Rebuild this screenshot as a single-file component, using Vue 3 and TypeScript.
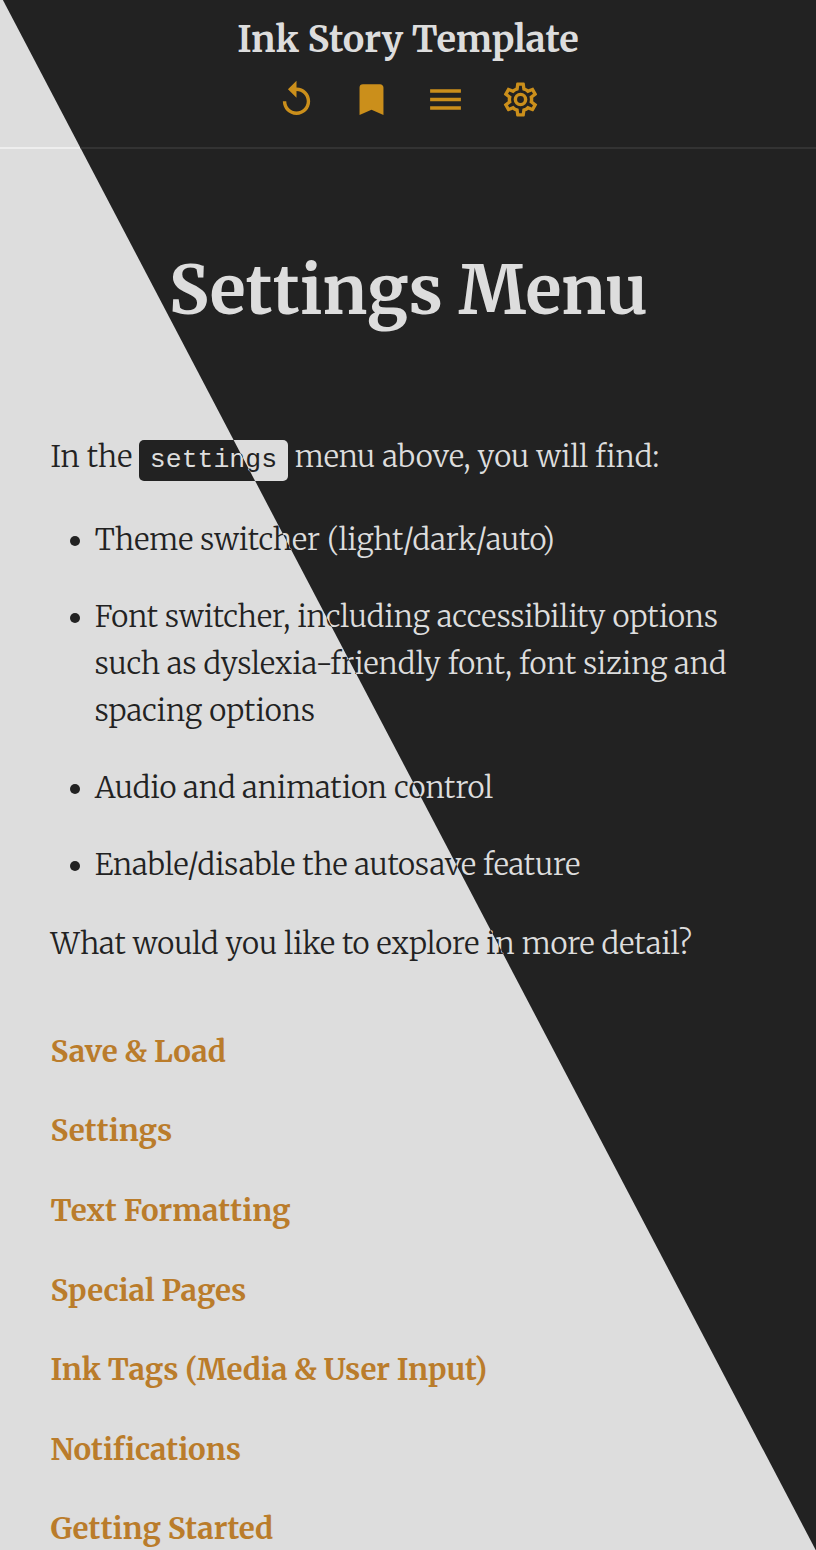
<script setup lang="ts">
interface Icon {
  name: string
  path: string
}

const themes = ['light', 'dark'] as const

const icons: Icon[] = [
  {
    name: 'Restart',
    path: 'M12 5V1L7 6l5 5V7c3.31 0 6 2.69 6 6s-2.69 6-6 6-6-2.69-6-6H4c0 4.42 3.58 8 8 8s8-3.58 8-8-3.58-8-8-8z',
  },
  { name: 'Save', path: 'M17 3H7A2 2 0 0 0 5 5V21L12 18L19 21V5C19 3.89 18.1 3 17 3Z' },
  { name: 'Menu', path: 'M3 6H21V8H3V6M3 11H21V13H3V11M3 16H21V18H3V16Z' },
  {
    name: 'Settings',
    path: 'M12,8A4,4 0 0,1 16,12A4,4 0 0,1 12,16A4,4 0 0,1 8,12A4,4 0 0,1 12,8M12,10A2,2 0 0,0 10,12A2,2 0 0,0 12,14A2,2 0 0,0 14,12A2,2 0 0,0 12,10M10,22C9.75,22 9.54,21.82 9.5,21.58L9.13,18.93C8.5,18.68 7.96,18.34 7.44,17.94L4.95,18.95C4.73,19.03 4.46,18.95 4.34,18.73L2.34,15.27C2.21,15.05 2.27,14.78 2.46,14.63L4.57,12.97L4.5,12L4.57,11L2.46,9.37C2.27,9.22 2.21,8.95 2.34,8.73L4.34,5.27C4.46,5.05 4.73,4.96 4.95,5.05L7.44,6.05C7.96,5.66 8.5,5.32 9.13,5.07L9.5,2.42C9.54,2.18 9.75,2 10,2H14C14.25,2 14.46,2.18 14.5,2.42L14.87,5.07C15.5,5.32 16.04,5.66 16.56,6.05L19.05,5.05C19.27,4.96 19.54,5.05 19.66,5.27L21.66,8.73C21.79,8.95 21.73,9.22 21.54,9.37L19.43,11L19.5,12L19.43,13L21.54,14.63C21.73,14.78 21.79,15.05 21.66,15.27L19.66,18.73C19.54,18.95 19.27,19.04 19.05,18.95L16.56,17.95C16.04,18.34 15.5,18.68 14.87,18.93L14.5,21.58C14.46,21.82 14.25,22 14,22H10M11.25,4L10.88,6.61C9.68,6.86 8.62,7.5 7.85,8.39L5.44,7.35L4.69,8.65L6.8,10.2C6.4,11.37 6.4,12.64 6.8,13.8L4.68,15.36L5.43,16.66L7.86,15.62C8.63,16.5 9.68,17.14 10.87,17.38L11.24,20H12.76L13.13,17.39C14.32,17.14 15.37,16.5 16.14,15.62L18.57,16.66L19.32,15.36L17.2,13.81C17.6,12.64 17.6,11.37 17.2,10.2L19.31,8.65L18.56,7.35L16.15,8.39C15.38,7.5 14.32,6.86 13.12,6.62L12.75,4H11.25Z',
  },
]

const features = [
  'Theme switcher (light/dark/auto)',
  'Font switcher, including accessibility options such as dyslexia-friendly font, font sizing and spacing options',
  'Audio and animation control',
  'Enable/disable the autosave feature',
]

const choices = [
  'Save & Load',
  'Settings',
  'Text Formatting',
  'Special Pages',
  'Ink Tags (Media & User Input)',
  'Notifications',
  'Getting Started',
]
</script>

<template>
  <div class="stage">
    <!-- The same page in both themes; the dark one is cut along the diagonal -->
    <div v-for="theme in themes" :key="theme" class="page" :class="theme" :aria-hidden="theme === 'dark'">
      <header class="topbar">
        <div class="title">Ink Story Template</div>
        <nav class="tools">
          <svg v-for="icon in icons" :key="icon.name" viewBox="0 0 24 24" :aria-label="icon.name">
            <path :d="icon.path" />
          </svg>
        </nav>
      </header>
      <main class="story">
        <h1>Settings Menu</h1>
        <p class="intro">In the <code>settings</code> menu above, you will find:</p>
        <ul class="features">
          <li v-for="feature in features" :key="feature">{{ feature }}</li>
        </ul>
        <p class="question">What would you like to explore in more detail?</p>
        <div class="choices">
          <a v-for="choice in choices" :key="choice">{{ choice }}</a>
        </div>
      </main>
    </div>
  </div>
</template>

<style>
body {
  margin: 0;
}
</style>

<style scoped>
.stage {
  display: grid;
  width: 816px;
  height: 1550px;
  overflow: hidden;
}
.page {
  grid-area: 1 / 1;
  height: 1550px;
  min-width: 0;
  overflow: hidden;
  font-family: Merriweather, "DejaVu Serif", serif;
  font-size: 29.48px;
  font-weight: 300;
  line-height: 47.2px;
  background: var(--bg);
  color: var(--fg);
}
.light {
  --bg: #ddd;
  --fg: #222;
  --rule: #eee;
  --accent: #ba7c2b;
}
.dark {
  --bg: #222;
  --fg: #ddd;
  --rule: #333;
  --accent: #cb8f1b;
  clip-path: polygon(2.9px 0, 815.7px 100%, 100% 100%, 100% 0);
}
.topbar {
  box-sizing: border-box;
  height: 149px;
  padding-top: 17px;
  border-bottom: 2px solid var(--rule);
  text-align: center;
}
.title {
  font-size: 36.1px;
  font-weight: 700;
  line-height: 45px;
}
.tools {
  display: flex;
  justify-content: center;
  gap: 33.8px;
  margin: 16.8px 0 0 0.8px;
}
.tools svg {
  width: 41px;
  height: 41px;
  fill: #cb8f1b;
}
.story {
  padding: 0 50px 0 50.5px;
}
h1 {
  margin: 100px 0 0;
  font-size: 66.4px;
  font-weight: 700;
  line-height: 83px;
  text-align: center;
}
.intro {
  margin: 101.3px 0 0;
}
code {
  padding: 0.205em 0.4em;
  border-radius: 5px;
  background: var(--fg);
  color: var(--bg);
  font: 400 26.5px "Liberation Mono", monospace;
}
.features {
  display: flex;
  flex-direction: column;
  gap: 29.8px;
  margin: 35.2px 0 0;
  padding-left: 44.2px;
  list-style: none;
}
.features li {
  position: relative;
}
.features li::before {
  content: "";
  position: absolute;
  top: 20px;
  left: -25.2px;
  width: 10px;
  height: 10px;
  border-radius: 50%;
  background: var(--fg);
}
.question {
  margin: 31.8px 0 0;
}
.choices {
  display: flex;
  flex-direction: column;
  gap: 32.35px;
  margin-top: 60.6px;
  color: var(--accent);
  font-weight: 700;
}
</style>
